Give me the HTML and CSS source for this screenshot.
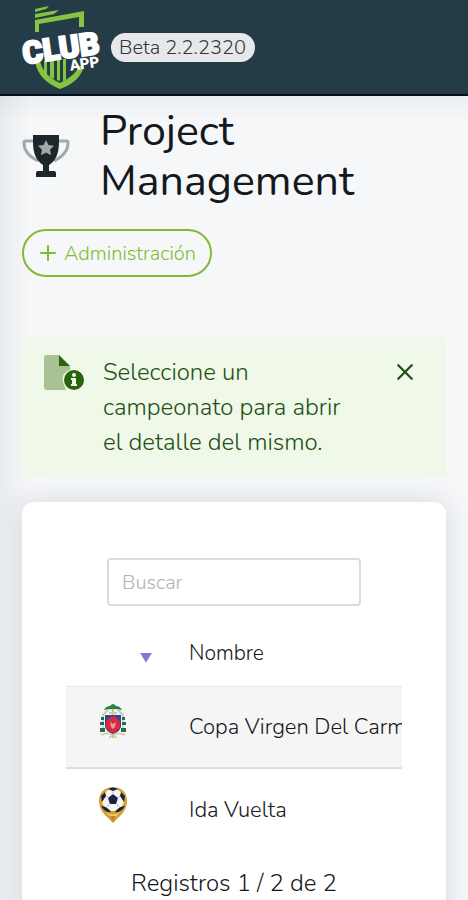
FILE: index.html
```html
<!DOCTYPE html>
<html lang="es">
<head>
<meta charset="utf-8">
<meta name="viewport" content="width=device-width, initial-scale=1">
<title>Project Management</title>
<link rel="stylesheet" href="styles.css">
</head>
<body>
<header class="topbar">
  <a class="brand" href="#" aria-label="Club App">
    <svg class="brand-logo" viewBox="0 0 78 84" aria-hidden="true">
      <g fill="#84c441">
        <path d="M14 4l14-3-3 3-11 3zM14 9l24-4-5 4-19 4z"/>
        <path d="M14 15l49-9v16h-5V12L18 19v8h-4z"/>
        <path d="M14 57l5-1q3 14 20 22 15-7 19-17h5q-4 16-24 23Q18 76 14 57z"/>
        <path d="M23 56h3v14l-3-3zM29 55h4v19l-4-2zM36 54h3v22l-3-1zM42 54h3v21l-3 1z"/>
      </g>
      <g class="brand-words" transform="rotate(-8 39 42)">
        <text class="brand-club" x="1" y="54">CLUB</text>
        <text class="brand-app" x="46" y="67">APP</text>
      </g>
    </svg>
  </a>
  <span class="version">Beta 2.2.2320</span>
</header>
<main class="page">
  <div class="heading">
    <svg class="heading-icon" viewBox="0 0 48 44" aria-hidden="true">
      <path d="M12 7H3q-1 0-1 2 0 11 14 18M36 7h9q1 0 1 2 0 11-14 18" fill="none" stroke="#a4a9ab" stroke-width="3"/>
      <path d="M11 1h26v7q0 17-10 23v6h5q2 0 2 2v4H14v-4q0-2 2-2h5v-6Q11 25 11 8z" fill="#1c262b"/>
      <path d="M24 6l2.400 5 5.600.8-4 3.900 1 5.500-5-2.600-5 2.600 1-5.500-4-3.900 5.600-.8z" fill="#a4a9ab"/>
    </svg>
    <h1 class="title">Project Management</h1>
  </div>
  <button class="admin-button" type="button">
    <svg class="plus" viewBox="0 0 16 16" aria-hidden="true"><path d="M8 1v14M1 8h14" stroke="currentColor" stroke-width="2" stroke-linecap="round"/></svg>
    Administración
  </button>
  <section class="notice" role="status">
    <svg class="notice-icon" viewBox="0 0 40 36" aria-hidden="true">
      <path d="M3 0h12v11h11v4q-9 3-7 12l3 8H3q-3 0-3-3V3q0-3 3-3z" fill="#a9c294"/>
      <path d="M15 0l11 11H15z" fill="#29640c"/>
      <circle cx="30" cy="25" r="10" fill="#29640c"/>
      <circle cx="30" cy="20" r="2" fill="#f0f8e9"/>
      <path d="M27 23h5v6h1v2h-6v-2h1v-4h-1z" fill="#f0f8e9"/>
    </svg>
    <p class="notice-text">Seleccione un campeonato para abrir el detalle del mismo.</p>
    <button class="close" type="button" aria-label="Cerrar">
      <svg class="close-icon" viewBox="0 0 16 16" aria-hidden="true"><path d="M2 2l12 12M14 2L2 14" stroke="currentColor" stroke-width="2" stroke-linecap="round"/></svg>
    </button>
  </section>
  <section class="card">
    <input class="search" type="search" placeholder="Buscar" aria-label="Buscar">
    <div class="table-scroll">
      <table class="table">
        <thead>
          <tr>
            <th class="logo-cell" aria-label="Escudo"><span class="sort"></span></th>
            <th>Nombre</th>
          </tr>
        </thead>
        <tbody>
          <tr class="selected">
            <td class="logo-cell">
              <svg class="crest" viewBox="0 0 28 36" aria-hidden="true">
                <path d="M14 2v32" stroke="#e4bd7b" stroke-width="2"/>
                <path d="M5 6q2-4 6-4 3-4 6 0 4 0 6 4-9-2-18 0z" fill="#27824a"/>
                <path d="M9 6L4 11M19 6l5 5M10 9h8" stroke="#c6cfae" stroke-width="2"/>
                <path d="M4 10v17M24 10v17" stroke="#a4beaa" stroke-width="1"/>
                <path d="M2 13h3v3H2zM1 18h4v3H1zM1 24h5v4H1zM23 13h3v3h-3zM23 18h4v3h-4zM22 24h5v4h-5z" fill="#286d4a"/>
                <path d="M6 11h16v11q0 5-8 8-8-3-8-8z" fill="#30479a"/>
                <path d="M7 18q7-11 14 0v6q-3 4-7 5-4-1-7-5z" fill="#df2836"/>
                <path d="M11 18l3 2 3-2-1 5-2 2-2-2z" fill="#cba6a4"/>
                <path d="M2 31q6-3 12 0 6-3 12 0M10 34l4-3 4 3" fill="none" stroke="#dfc093" stroke-width="1.500"/>
              </svg>
            </td>
            <td>Copa Virgen Del Carmen</td>
          </tr>
          <tr>
            <td class="logo-cell">
              <svg class="crest" viewBox="0 0 28 36" aria-hidden="true">
                <path d="M14 0Q28 1 28 14q0 7-5 13l-9 9-9-9Q0 21 0 14 0 1 14 0z" fill="#d4a132"/>
                <circle cx="14" cy="13" r="11" fill="#f7f5ee"/>
                <path d="M14 7l5 4-2 6h-6l-2-6zM9 2q5-3 10 0l-5 2zM2 9l4-4 1 4-4 6zM26 9l-4-4-1 4 4 6z" fill="#17234a"/>
                <path d="M14 4v4M7 9l3 2M21 9l-3 2M11 16l-3 4M17 16l3 4" stroke="#b6bac3"/>
                <path d="M2 19q6 0 10 6-6 1-10-6zM26 19q-6 0-10 6 6 1 10-6z" fill="#17234a"/>
                <path d="M7 25q7 5 14 0l-7 8z" fill="#efca65"/>
                <path d="M11 29h6l-3 6z" fill="#c18722"/>
              </svg>
            </td>
            <td>Ida Vuelta</td>
          </tr>
        </tbody>
      </table>
    </div>
    <p class="records">Registros 1 / 2 de 2</p>
  </section>
</main>
</body>
</html>
```
FILE: styles.css
```css
* { box-sizing: border-box; }
body {
  margin: 0;
  background: #f5f7f9;
  color: #15191d;
  font-family: Nunito, "Open Sans", sans-serif;
  font-size: 21px;
  font-weight: 300;
}
button, input { font: inherit; }
.topbar {
  display: flex;
  align-items: center;
  gap: 12px;
  height: 96px;
  padding: 0 21px;
  background: #243c47;
  border-bottom: 2px solid #06101c;
}
.brand, .brand-logo { display: block; }
.brand-logo { width: 78px; height: 84px; overflow: visible; }
.brand-words {
  fill: #fff;
  stroke: #fff;
  stroke-linejoin: miter;
  font-family: Roboto, sans-serif;
  font-weight: 900;
}
.brand-club { font-size: 31px; stroke-width: 2px; }
.brand-app { font-size: 15px; stroke-width: 0; }
.version {
  padding: 0 9px 0 8px;
  border-radius: 15px;
  background: #e6e8ec;
  color: #30363b;
  font-size: 20px;
  line-height: 29px;
}
.page {
  padding: 10px 22px 24px;
  background:
    linear-gradient(to right, rgba(40, 50, 60, 0.06), transparent 30px),
    linear-gradient(to bottom, rgba(40, 50, 60, 0.05), transparent 24px);
}
.heading { display: flex; align-items: center; gap: 30px; }
.heading-icon { flex: none; width: 48px; height: 44px; }
.title { margin: 0; font-size: 43px; font-weight: 400; line-height: 50px; }
.admin-button {
  display: flex;
  align-items: center;
  gap: 8px;
  height: 48px;
  margin-top: 23px;
  padding: 0 14px 0 16px;
  border: 2px solid #82bb32;
  border-radius: 24px;
  background: transparent;
  color: #82bb32;
  font-size: 20px;
}
.plus { width: 16px; height: 16px; }
.notice {
  display: flex;
  align-items: flex-start;
  gap: 19px;
  margin-top: 60px;
  padding: 18px 31px 17px 22px;
  background: #f0f8e9;
  color: #205014;
}
.notice-icon { flex: none; width: 40px; height: 36px; }
.notice-text { flex: 1; margin: 0; padding-right: 24px; font-size: 24px; line-height: 35px; }
.close { padding: 8px 0; border: 0; background: none; color: #204f13; }
.close-icon { display: block; width: 20px; height: 18px; }
.card {
  margin-top: 25px;
  padding: 56px 44px 28px;
  border-radius: 12px;
  background: #fff;
  box-shadow: 0 0 28px rgba(40, 50, 60, 0.15);
}
.search {
  display: block;
  width: calc(100% - 82px);
  height: 48px;
  margin: 0 auto;
  padding: 0 13px;
  border: 2px solid #d9dbdd;
  border-radius: 4px;
  background: #fff;
  color: #333;
  font-size: 20px;
}
.search::placeholder { color: #adb2b5; opacity: 1; }
.table-scroll { margin-top: 14px; overflow: hidden; }
.table { min-width: 100%; border-collapse: collapse; white-space: nowrap; }
.table th, .table td { padding: 0 12px 0 0; text-align: left; font-weight: 300; }
.table th { height: 66px; font-size: 21px; }
.table td { height: 82px; font-size: 22px; }
.table .logo-cell { width: 123px; min-width: 123px; padding-left: 33px; }
.sort {
  display: block;
  width: 12px;
  height: 10px;
  margin: 10px 0 0 41px;
  background: #7b7bdc;
  clip-path: polygon(0 0, 100% 0, 50% 100%);
}
.selected { background: #f5f5f5; border-top: 1px solid #e8e8e8; border-bottom: 2px solid #dedede; }
.crest { display: block; width: 28px; height: 36px; margin-bottom: 10px; }
.records { margin: 17px 0 0; text-align: center; font-size: 24px; line-height: 32px; }
```
